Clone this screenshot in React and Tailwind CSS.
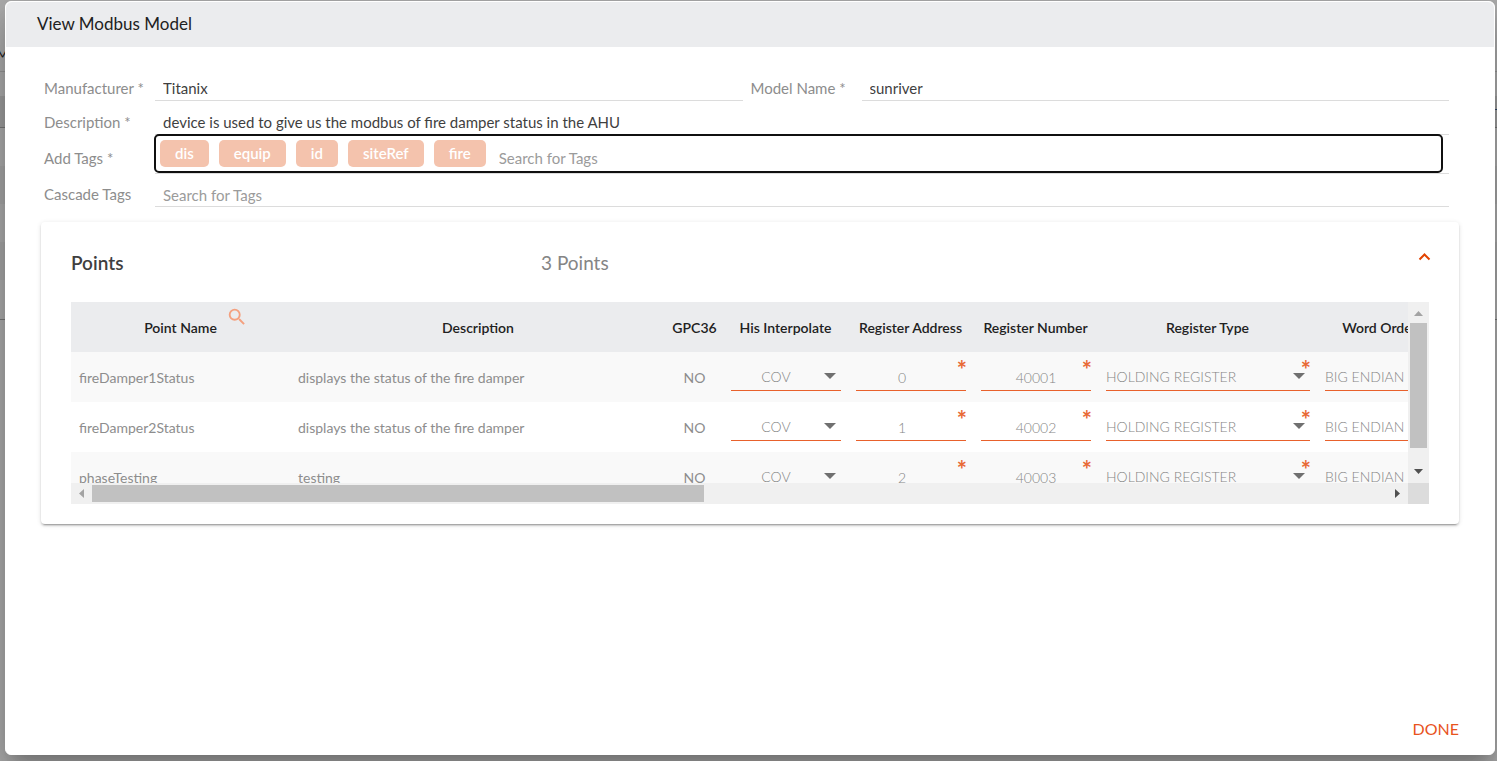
import { useState } from 'react';
import { MdSearch } from 'react-icons/md';

const TAGS = ['dis', 'equip', 'id', 'siteRef', 'fire'];

const POINTS = [
  { name: 'fireDamper1Status', description: 'displays the status of the fire damper', address: '0', number: '40001' },
  { name: 'fireDamper2Status', description: 'displays the status of the fire damper', address: '1', number: '40002' },
  { name: 'phaseTesting', description: 'testing', address: '2', number: '40003' }
];

const COLUMNS = [
  { label: 'Point Name', width: 'w-[219px]' },
  { label: 'Description', width: 'w-[376px]' },
  { label: 'GPC36', width: 'w-[57px]' },
  { label: 'His Interpolate', width: 'w-[125px]' },
  { label: 'Register Address', width: 'w-[125px]' },
  { label: 'Register Number', width: 'w-[125px]' },
  { label: 'Register Type', width: 'w-[219px]' },
  { label: 'Word Order', width: 'w-[125px]' }
];

const inputClass = 'block w-full h-[25px] px-2 border-b border-[#dcdcdc] bg-transparent text-[15px] text-[#3f3f3f] placeholder:text-[#9b9b9b] outline-none';
const labelClass = 'w-[111px] shrink-0 text-[15px] text-[#8d8d8d]';

function PageBehind() {
  return (
    <div className="absolute inset-0 overflow-hidden bg-[#adadad] text-sm" aria-hidden="true">
      <div className="h-[72px] border-b border-[#969696] pt-11 text-[#222]">
        <span className="-ml-1">M</span>
      </div>
      <div className="h-6" />
      <div className="flex h-8 items-center justify-end border-b border-[#777] bg-[#9e9e9e] pt-1 text-[#1d4468]">
        <span className="-mr-1.5">T</span>
      </div>
      <div className="h-[38px]" />
      <div className="h-[38px] bg-[#a7a7a7]" />
      <div className="h-[38px]" />
      <div className="h-[38px] bg-[#a7a7a7]" />
      <div className="h-10 border-b border-[#777]" />
    </div>
  );
}

function Required() {
  return <span className="absolute -right-px top-1.5 text-2xl font-bold leading-6 text-[#e86a36]" aria-hidden="true">*</span>;
}

function SelectCell({ label, value, required, centered }) {
  return (
    <td className="py-0 pl-2 pr-[7px]">
      <div className="relative mb-[11px] h-[39px] border-b border-[#e8612c]">
        <select aria-label={label} defaultValue={value}
          className={`h-full w-full appearance-none bg-transparent pr-5 pt-3 font-light text-[#858585] outline-none ${centered ? '[text-align-last:center]' : ''}`}>
          <option>{value}</option>
        </select>
        <svg className="pointer-events-none absolute right-[5px] top-[21px]" width="12" height="6" viewBox="0 0 12 6">
          <path d="M0 0h12L6 6z" fill="#707070" />
        </svg>
        {required && <Required />}
      </div>
    </td>
  );
}

function NumberCell({ label, value, className }) {
  return (
    <td className="py-0 pl-2 pr-[7px]">
      <div className="relative mb-[11px] h-[39px] border-b border-[#e8612c]">
        <input aria-label={label} defaultValue={value}
          className={`h-full w-full bg-transparent pt-3 text-center font-light text-[#858585] outline-none ${className || ''}`} />
        <Required />
      </div>
    </td>
  );
}

function PointsTable() {
  return (
    <div className="grid h-[202px] grid-cols-[minmax(0,1fr)_21px] grid-rows-[minmax(0,1fr)_21px]">
      <div className="overflow-hidden">
        <table className="w-[1371px] table-fixed border-collapse text-sm">
          <thead>
            <tr className="h-[50px] bg-[#ebecee] text-[#212121]">
              {COLUMNS.map(c => (
                <th key={c.label} className={`relative whitespace-nowrap p-0 pt-0.5 font-semibold ${c.width}`}>
                  {c.label}
                  {c.label === 'Point Name' && (
                    <button type="button" aria-label="Search points" className="absolute left-[155px] top-1">
                      <MdSearch size={22} color="#f4a07f" />
                    </button>
                  )}
                </th>
              ))}
            </tr>
          </thead>
          <tbody>
            {POINTS.map(p => (
              <tr key={p.name} className="h-[50px] text-[#8d8d8d] odd:bg-[#f9f9f9]">
                <td className="px-2 pb-0 pt-0.5">{p.name}</td>
                <td className="px-2 pb-0 pt-0.5">{p.description}</td>
                <td className="p-0 pt-0.5 text-center">NO</td>
                <SelectCell label="His Interpolate" value="COV" centered />
                <NumberCell label="Register Address" value={p.address} className="pr-[18px]" />
                <NumberCell label="Register Number" value={p.number} />
                <SelectCell label="Register Type" value="HOLDING REGISTER" required />
                <SelectCell label="Word Order" value="BIG ENDIAN" />
              </tr>
            ))}
          </tbody>
        </table>
      </div>

      <div className="flex flex-col items-center bg-[#f0f0f0]">
        <div className="flex h-[21px] items-center justify-center pt-0.5">
          <svg width="9" height="5" viewBox="0 0 9 5"><path d="M0 5h9L4.500 0z" fill="#a3a3a3" /></svg>
        </div>
        <div className="h-[125px] w-[17px] bg-[#c1c1c1]" />
        <div className="mt-auto flex h-6 items-center justify-center">
          <svg width="9" height="5" viewBox="0 0 9 5"><path d="M0 0h9L4.500 5z" fill="#505050" /></svg>
        </div>
      </div>

      <div className="flex items-center bg-[#f0f0f0]">
        <div className="flex w-[21px] justify-center">
          <svg width="5" height="9" viewBox="0 0 5 9"><path d="M5 0v9L0 4.500z" fill="#a3a3a3" /></svg>
        </div>
        <div className="flex-1">
          <div className="h-[17px] w-[47.25%] bg-[#c1c1c1]" />
        </div>
        <div className="flex w-[21px] justify-center">
          <svg width="5" height="9" viewBox="0 0 5 9"><path d="M0 0v9L5 4.500z" fill="#505050" /></svg>
        </div>
      </div>
      <div className="bg-[#dcdcdc]" />
    </div>
  );
}

export default function App() {
  const [expanded, setExpanded] = useState(true);

  return (
    <div className="relative flex min-h-screen flex-col pb-1.5 pl-[5px] pr-0.5 pt-px font-['Lato',sans-serif]">
      <PageBehind />
      <div role="dialog" aria-labelledby="dialog-title"
        className="relative flex flex-1 flex-col rounded-md border border-white bg-white shadow-[0_11px_15px_-7px_rgba(0,0,0,0.2),0_24px_38px_3px_rgba(0,0,0,0.14),0_9px_46px_8px_rgba(0,0,0,0.12)]">
        <header className="flex h-[45px] items-center rounded-t-md bg-[#ebecee] px-[31px] pb-0.5">
          <h1 id="dialog-title" className="text-[17px] text-[#212121]">View Modbus Model</h1>
        </header>

        <form className="pl-[38px] pr-[45px] pt-[29px]" onSubmit={e => e.preventDefault()}>
          <div className="flex gap-2">
            <div className="flex flex-1 items-center">
              <label htmlFor="manufacturer" className={labelClass}>Manufacturer *</label>
              <input id="manufacturer" className={inputClass} defaultValue="Titanix" />
            </div>
            <div className="flex flex-1 items-center">
              <label htmlFor="model" className={labelClass}>Model Name *</label>
              <input id="model" className={inputClass} defaultValue="sunriver" />
            </div>
          </div>
          <div className="mt-[9px] flex items-center">
            <label htmlFor="description" className={labelClass}>Description *</label>
            <input id="description" className={inputClass}
              defaultValue="device is used to give us the modbus of fire damper status in the AHU" />
          </div>
          <div className="flex items-center">
            <label htmlFor="tags" className={`${labelClass} pt-2`}>Add Tags *</label>
            <div className="flex-1 border-b border-[#dcdcdc] pb-px">
              <div className="mr-[7px] flex h-[37px] items-center gap-2.5 rounded-sm px-[5px] outline-2 -outline-offset-1 outline-[#101010]">
                {TAGS.map(t => (
                  <span key={t} className="h-[27px] rounded-[5px] bg-[#f4c3ad] px-[15px] text-[15px] font-semibold leading-[27px] text-white">{t}</span>
                ))}
                <input id="tags" placeholder="Search for Tags"
                  className="h-full flex-1 pl-[3px] pt-2 text-[15px] placeholder:text-[#9b9b9b] outline-none" />
              </div>
            </div>
          </div>
          <div className="mt-2 flex items-center">
            <label htmlFor="cascade" className={labelClass}>Cascade Tags</label>
            <input id="cascade" className={`${inputClass} pt-0.5`} placeholder="Search for Tags" />
          </div>
        </form>

        <section className="mx-[35px] mt-[15px] rounded bg-white px-[30px] pb-5 shadow-[0_3px_1px_-2px_rgba(0,0,0,0.2),0_2px_2px_0_rgba(0,0,0,0.14),0_1px_5px_0_rgba(0,0,0,0.12)]">
          <div className="flex h-20 items-center">
            <h2 className="w-[470px] pt-0.5 text-[19px] font-semibold text-[#3f3f3f]">Points</h2>
            <p className="pt-0.5 text-[19px] text-[#858585]">{POINTS.length} Points</p>
            <button type="button" aria-label="Toggle points" aria-expanded={expanded} onClick={() => setExpanded(!expanded)}
              className="ml-auto -mr-0.5 pb-3">
              <svg width="13" height="9" viewBox="0 0 13 9" fill="none" className={expanded ? '' : 'rotate-180'}>
                <path d="M1.500 7.500l5-5 5 5" stroke="#e24301" strokeWidth="2" />
              </svg>
            </button>
          </div>
          {expanded && <PointsTable />}
        </section>

        <div className="mt-auto flex justify-end px-[35px] pb-[13px]">
          <button type="button" className="text-base text-[#e8531d]">DONE</button>
        </div>
      </div>
    </div>
  );
}
